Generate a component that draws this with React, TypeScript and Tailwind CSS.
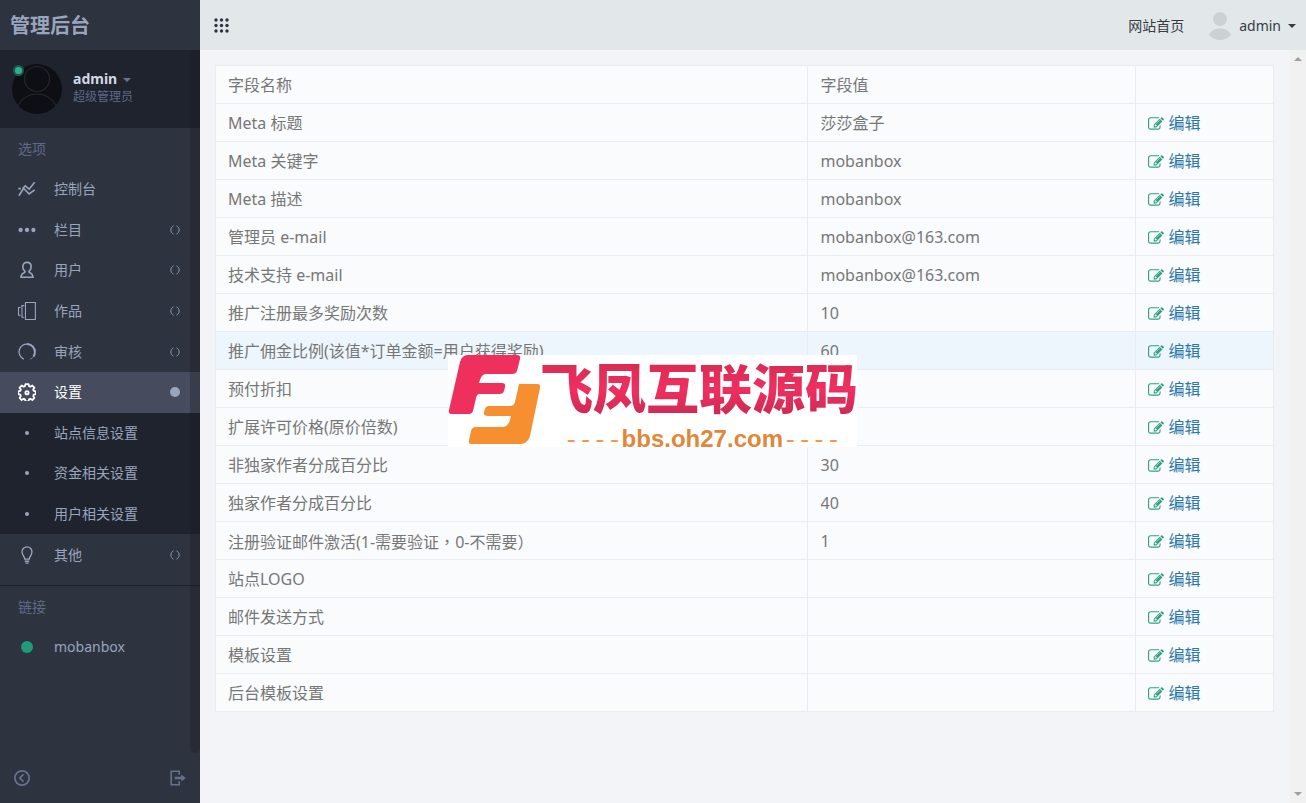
import React, { useState } from 'react';

type IconProps = { className?: string };

const Svg: React.FC<{ className?: string; children: React.ReactNode; width?: number }> = ({
  className,
  children,
  width = 1.2,
}) => (
  <svg viewBox="0 0 20 20" fill="none" stroke="currentColor" strokeWidth={width} className={className} aria-hidden="true">
    {children}
  </svg>
);

const ChartIcon = ({ className }: IconProps) => (
  <Svg className={className} width={1.8}>
    <path d="M1 17.5 6.2 9.2l6.1 6.3L18.6 11M.5 9.6h2.7M5.2 9.4 8 6.5l4.4 3.700L18.5 2.5" />
  </Svg>
);

const DotsIcon = ({ className }: IconProps) => (
  <svg viewBox="0 0 20 20" fill="currentColor" className={className} aria-hidden="true">
    <circle cx="2.9" cy="10" r="2.400" />
    <circle cx="10" cy="10" r="2.400" />
    <circle cx="17.1" cy="10" r="2.400" />
  </svg>
);

const UserIcon = ({ className }: IconProps) => (
  <Svg className={className} width={1.8}>
    <path d="M7.9 11.6C6.2 10.4 5.4 8.4 5.4 6.3 5.4 3.2 7.2 1.500 10 1.500s4.600 1.700 4.600 4.800c0 2.100-.8 4.100-2.500 5.300l.4 1.100c2.400.6 3.800 2 4.200 5.400H3.300c.4-3.400 1.800-4.800 4.200-5.400z" />
  </Svg>
);

const AlbumIcon = ({ className }: IconProps) => (
  <Svg className={className} width={1.2}>
    <path d="M8.3.6h11v18.800h-11zM7 4H4.400v13H7M3 6.200H.6v8.600H3" />
  </Svg>
);

const SpinnerIcon = ({ className }: IconProps) => (
  <Svg className={className} width={1.4}>
    <path d="M6.500 18A8.800 8.800 0 1 1 18.800 10" />
    <path d="M10 1.200A8.800 8.800 0 0 1 18.800 10c0 2-.6 3.800-1.700 5.200" strokeWidth="2.200" />
    <path d="M17.100 15.200c-1 1.300-2 2.200-3.600 2.900" strokeWidth=".7" />
  </Svg>
);

const GearIcon = ({ className }: IconProps) => (
  <Svg className={className} width={2}>
    <path
      strokeLinejoin="round"
      d="M8.300 1.200h3.400l.6 2.300 1.500.6 2.100-1.300 2.300 2.400-1.300 2.100.6 1.500 2.300.6v2.900l-2.300.6-.6 1.500 1.300 2.100-2.300 2.400-2.100-1.300-1.500.6-.6 2.300H8.300l-.6-2.300-1.500-.6-2.100 1.300-2.300-2.400 1.300-2.100-.6-1.500-2.300-.6V9.400l2.300-.6.6-1.500-1.300-2.100 2.300-2.400 2.100 1.300 1.500-.6z"
    />
    <circle cx="10" cy="10.800" r="1.800" />
  </Svg>
);

const BulbIcon = ({ className }: IconProps) => (
  <Svg className={className} width={1.5}>
    <path d="M7.500 14.500c0-2.700-3-4-3-8a5.500 5.500 0 0 1 11 0c0 4-3 5.300-3 8zM7.500 16.900h5M8.300 19h3.400" />
  </Svg>
);

const FoldIcon = () => (
  <svg viewBox="0 0 10 10" fill="none" stroke="#8f9ab1" strokeWidth="1" className="h-2.5 w-2.5" aria-hidden="true">
    <path d="M3.500.8C0 2.500 0 7.500 3.500 9.200M6.500.8C10 2.500 10 7.500 6.500 9.200" />
  </svg>
);

const EditIcon = () => (
  <svg viewBox="0 0 1792 1792" fill="#31a181" className="h-4 w-4" aria-hidden="true">
    <path d="M888 1184l116-116-152-152-116 116v56h96v96h56zm440-720q-16-16-33 1l-350 350q-17 17-1 33t33-1l350-350q17-17 1-33zm80 594v190q0 119-84.500 203.500t-203.500 84.500h-832q-119 0-203.500-84.500t-84.500-203.500v-832q0-119 84.500-203.500t203.500-84.500h832q63 0 117 25 15 7 18 23 3 17-9 29l-49 49q-14 14-32 8-23-6-45-6h-832q-66 0-113 47t-47 113v832q0 66 47 113t113 47h832q66 0 113-47t47-113v-126q0-13 9-22l64-64q15-15 35-7t20 29zm-96-738l288 288-672 672h-288v-288zm444 132l-92 92-288-288 92-92q28-28 68-28t68 28l152 152q28 28 28 68t-28 68z" />
  </svg>
);

const CaretIcon = ({ className }: IconProps) => (
  <svg viewBox="0 0 8 4" fill="currentColor" className={className} aria-hidden="true">
    <path d="M0 0h8L4 4z" />
  </svg>
);

const GridIcon = () => (
  <svg viewBox="0 0 15 15" fill="#2f343c" className="h-[15px] w-[15px]" aria-hidden="true">
    {[2, 7.5, 13].map((y) => [2, 7.5, 13].map((x) => <circle key={`${x}-${y}`} cx={x} cy={y} r="1.7" />))}
  </svg>
);

interface NavItem {
  label: string;
  icon: React.FC<IconProps>;
  foldable?: boolean;
  children?: string[];
}

const navItems: NavItem[] = [
  { label: '控制台', icon: ChartIcon },
  { label: '栏目', icon: DotsIcon, foldable: true },
  { label: '用户', icon: UserIcon, foldable: true },
  { label: '作品', icon: AlbumIcon, foldable: true },
  { label: '审核', icon: SpinnerIcon, foldable: true },
  { label: '设置', icon: GearIcon, children: ['站点信息设置', '资金相关设置', '用户相关设置'] },
  { label: '其他', icon: BulbIcon, foldable: true },
];

const rows = [
  { name: 'Meta 标题', value: '莎莎盒子' },
  { name: 'Meta 关键字', value: 'mobanbox' },
  { name: 'Meta 描述', value: 'mobanbox' },
  { name: '管理员 e-mail', value: 'mobanbox@163.com' },
  { name: '技术支持 e-mail', value: 'mobanbox@163.com' },
  { name: '推广注册最多奖励次数', value: '10' },
  { name: '推广佣金比例(该值*订单金额=用户获得奖励)', value: '60' },
  { name: '预付折扣', value: '' },
  { name: '扩展许可价格(原价倍数)', value: '' },
  { name: '非独家作者分成百分比', value: '30' },
  { name: '独家作者分成百分比', value: '40' },
  { name: '注册验证邮件激活(1-需要验证，0-不需要）', value: '1' },
  { name: '站点LOGO', value: '' },
  { name: '邮件发送方式', value: '' },
  { name: '模板设置', value: '' },
  { name: '后台模板设置', value: '' },
];

const Sidebar: React.FC = () => {
  const [active, setActive] = useState('设置');

  return (
    <aside className="relative flex w-[200px] shrink-0 flex-col bg-[#2e3340] text-sm text-[#99a5bd]">
      <h1 className="flex h-[50px] shrink-0 items-center px-2.5 pt-0.5 text-xl font-bold">管理后台</h1>

      <div className="flex h-[78px] shrink-0 items-center gap-[11px] bg-[#1f232e] px-3">
        <div className="relative">
          <svg viewBox="0 0 50 50" className="h-[50px] w-[50px]" aria-hidden="true">
            <circle cx="25" cy="25" r="25" fill="#0d0f14" />
            <g fill="none" stroke="#25282f" strokeWidth="1.2">
              <circle cx="25" cy="15" r="12.500" />
              <path d="M6 41.500C10 34 17 30 25 30s15 4 19 11.500" />
            </g>
          </svg>
          <span className="absolute top-px left-px h-[11px] w-[11px] rounded-full border-2 border-[#1c5950] bg-[#2fb08c]" />
        </div>
        <div className="pb-0.5">
          <button className="flex items-center gap-1.5 text-sm leading-[18px] font-bold text-[#d3d8e4]">
            admin
            <CaretIcon className="mt-0.5 h-1 w-2 text-[#6b7590]" />
          </button>
          <p className="text-xs leading-[18px] text-[#5e6985]">超级管理员</p>
        </div>
      </div>

      <h2 className="flex h-[41px] shrink-0 items-center px-[18px] text-[#5e6985]">选项</h2>
      <nav className="flex h-[406px] shrink-0 flex-col">
        {navItems.map(({ label, icon: Icon, foldable, children }) => {
          const isActive = label === active;
          return (
            <React.Fragment key={label}>
              <button
                onClick={() => setActive(label)}
                className={`flex flex-1 basis-0 items-center pr-5 pl-[18px] text-left ${
                  isActive ? 'bg-[#464c5d] text-white' : ''
                }`}
              >
                <Icon className="h-[18px] w-[18px]" />
                <span className="ml-[18px] flex-1">{label}</span>
                {foldable && <FoldIcon />}
                {children && <span className="h-2.5 w-2.5 rounded-full bg-[#99a5bd]" />}
              </button>
              {children && (
                <ul className="flex flex-[3] basis-0 flex-col bg-[#1f232e]">
                  {children.map((child) => (
                    <li key={child} className="flex flex-1">
                      <a href="#" className="flex flex-1 items-center pl-[25px]">
                        <span className="h-1 w-1 rounded-full bg-[#99a5bd]" />
                        <span className="ml-[25px]">{child}</span>
                      </a>
                    </li>
                  ))}
                </ul>
              )}
            </React.Fragment>
          );
        })}
      </nav>

      <div className="mt-2.5 border-t border-[#1c202b]">
        <h2 className="flex h-[42px] items-center px-[18px] text-[#5e6985]">链接</h2>
        <a href="#" className="flex h-[38px] items-center pl-[21px]">
          <span className="h-3 w-3 rounded-full bg-[#209a78]" />
          <span className="ml-[21px]">mobanbox</span>
        </a>
      </div>

      <div className="mt-auto flex h-[50px] shrink-0 items-center justify-between px-3.5 text-[#66718d]">
        <button aria-label="收起">
          <Svg className="h-4 w-4" width={2.2}>
            <circle cx="10" cy="10" r="8.900" />
            <path d="M11.800 5.500 7.300 10l4.500 4.500" />
          </Svg>
        </button>
        <button aria-label="退出">
          <Svg className="h-4 w-4" width={2}>
            <path d="M11.500 6V1.500H1.500v17h10V14" />
            <path d="M6 8.400h8V5.500l5.800 4.500L14 14.500v-2.900H6z" fill="currentColor" stroke="none" />
          </Svg>
        </button>
      </div>

      {/* scroll track */}
      <div className="pointer-events-none absolute top-[50px] right-0 bottom-[50px] w-2.5 rounded-b-md bg-[#1a1c22]/30" />
    </aside>
  );
};

const TopBar: React.FC = () => (
  <header className="flex h-[50px] shrink-0 items-center justify-between bg-[#e2e8ea] pr-2.5 pl-3.5 text-sm text-[#363b44]">
    <button aria-label="菜单">
      <GridIcon />
    </button>
    <div className="flex items-center pt-0.5">
      <a href="#" className="mr-6">
        网站首页
      </a>
      <button className="flex items-center">
        <svg viewBox="0 0 24 30" fill="#ccd1d4" className="h-[30px] w-6" aria-hidden="true">
          <circle cx="12" cy="8" r="7" />
          <path d="M1 24C3 19.500 7 17.500 12 17.500s9 2 11 6.500c-3 3.500-7 5-11 5S4 27.500 1 24z" />
        </svg>
        <span className="ml-[7px]">admin</span>
        <CaretIcon className="ml-[7px] h-1 w-2" />
      </button>
    </div>
  </header>
);

const SettingsTable: React.FC = () => (
  <table className="w-full table-fixed border-collapse bg-[#f9fbfc] text-left text-base leading-[21px] text-[#777]">
    <colgroup>
      <col className="w-[56%]" />
      <col className="w-[31%]" />
      <col className="w-[13%]" />
    </colgroup>
    <thead>
      <tr className="h-[38px]">
        <th className="border border-[#e9ecf0] px-3 pt-0.5 font-normal">字段名称</th>
        <th className="border border-[#e9ecf0] px-3 pt-0.5 font-normal">字段值</th>
        <th className="border border-[#e9ecf0] px-3" />
      </tr>
    </thead>
    <tbody>
      {rows.map((row) => (
        <tr key={row.name} className={`h-[38px] ${row.value === '60' ? 'bg-[#edf6fd]' : ''}`}>
          <td className="border border-[#e9ecf0] px-3 pt-0.5">
            {/* centred full-width comma */}
            {row.name.split('，').map((part, i) => (
              <React.Fragment key={part}>
                {i > 0 && <span className="font-['Noto_Sans_CJK_TC',sans-serif]">，</span>}
                {part}
              </React.Fragment>
            ))}
          </td>
          <td className="border border-[#e9ecf0] px-3 pt-0.5">{row.value}</td>
          <td className="border border-[#e9ecf0] px-3 pt-0.5">
            <a href="#" className="flex items-center gap-1 text-[#2b78a8]">
              <EditIcon />
              编辑
            </a>
          </td>
        </tr>
      ))}
    </tbody>
  </table>
);

const Dashes = () => (
  <span className="font-['Liberation_Mono',monospace] font-normal text-[#f0954a]">----</span>
);

const Watermark: React.FC = () => (
  <div className="pointer-events-none absolute top-[305px] left-[248px] flex h-[92px] w-[409px] bg-white">
    <svg viewBox="0 0 92 92" className="h-[92px] w-[92px] shrink-0" aria-hidden="true">
      <path
        fill="#f0305c"
        d="M20 0h49q4 0 3 4l-3 12q-1 3-5 3H38q-5 0-7 9h23q4 0 3 4l-1 4q-1 3-5 3H31q-2 0-3 4l-3 13q-1 3-4 3H4q-4 0-3-4L12 7q2-7 8-7z"
      />
      <path
        fill="#f68f30"
        d="M71 29h18q4 0 3 4L82 81q-2 7-9 8H24q-4 0-3-4l2-9q1-4 5-4h27q6 0 8-11H40q-5 0-4-4l1-3q1-3 4-3h21q4 0 5-4l3-13q0-3 1-4z"
      />
    </svg>
    <div className="flex flex-1 flex-col">
      <p className="h-[68px] bg-gradient-to-b from-[#d32a50] via-[#f02f60] to-[#c22950] bg-clip-text text-[53px] leading-[68px] font-black whitespace-nowrap text-transparent">
        飞凤互联源码
      </p>
      <p className="pl-6 font-['Liberation_Sans',sans-serif] text-2xl leading-8 font-bold whitespace-nowrap text-[#e0873a]">
        <Dashes />
        bbs.oh27.com
        <Dashes />
      </p>
    </div>
  </div>
);

const PageScroll: React.FC = () => (
  <div className="flex w-4 shrink-0 flex-col items-center justify-between bg-[#f1f1f1] py-[7px] text-[#a0a0a0]">
    <CaretIcon className="h-1 w-2 rotate-180" />
    <CaretIcon className="h-1 w-2" />
  </div>
);

export default function App() {
  return (
    <div className="flex h-screen overflow-hidden font-['Noto_Sans','Noto_Sans_CJK_SC',sans-serif]">
      <Sidebar />
      <div className="flex min-w-0 flex-1 flex-col bg-[#f2f4f8]">
        <TopBar />
        <div className="relative flex min-h-0 flex-1">
          <main className="min-w-0 flex-1 py-[15px] pr-4 pl-[15px]">
            <SettingsTable />
          </main>
          <PageScroll />
          <Watermark />
        </div>
      </div>
    </div>
  );
}
